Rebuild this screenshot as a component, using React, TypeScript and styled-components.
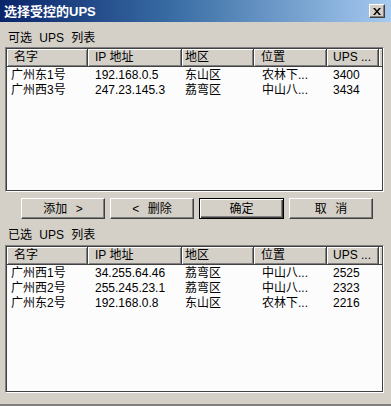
import React from 'react';
import styled, { createGlobalStyle } from 'styled-components';

const Global = createGlobalStyle`
  html, body { margin: 0; padding: 0; background: #d4d0c8; }
  body {
    font-family: "Liberation Sans", "Noto Sans CJK SC", sans-serif;
    font-size: 12px;
    color: #000;
  }
`;

const Dialog = styled.div`
  width: 391px;
  height: 406px;
  box-sizing: border-box;
  background: #d4d0c8;
  display: flex;
  flex-direction: column;
  border-bottom: 2px solid #808080;
  overflow: hidden;
`;

const TitleBar = styled.div`
  height: 22px;
  flex: none;
  display: flex;
  align-items: center;
  justify-content: space-between;
  padding: 0 6px 0 4px;
  background: linear-gradient(to right, #0a246a 0%, #3a6ea5 45%, #a6caf0 100%);
`;

const Title = styled.span`
  color: #fff;
  font-weight: bold;
  font-size: 13px;
  line-height: 15px;
`;

const CloseButton = styled.div`
  width: 16px;
  height: 14px;
  box-sizing: border-box;
  background: #d4d0c8;
  border: 1px solid;
  border-color: #fff #404040 #404040 #fff;
  box-shadow: inset -1px -1px #808080;
  display: flex;
  align-items: center;
  justify-content: center;
`;

const Body = styled.div`
  flex: 1;
  display: flex;
  flex-direction: column;
  padding: 0 7px 0 5px;
`;

const SectionLabel = styled.div<{ $top: number }>`
  margin-top: ${(p) => p.$top}px;
  height: 14px;
  line-height: 14px;
  padding-left: 3px;
  white-space: pre;
  word-spacing: 4px;
`;

const ListView = styled.div<{ $top: number; $height: number }>`
  margin-top: ${(p) => p.$top}px;
  height: ${(p) => p.$height}px;
  box-sizing: border-box;
  background: #fcfcfc;
  border: 1px solid;
  border-color: #808080 #fff #fff #808080;
  box-shadow: inset 1px 1px #404040, inset -1px -1px #404040;
  padding: 1px;
  display: flex;
  flex-direction: column;
`;

const COLS = '81px 94px 72px 73px 52px 1fr';

const HeaderRow = styled.div`
  display: grid;
  grid-template-columns: ${COLS};
  height: 18px;
  flex: none;
`;

const HeaderCell = styled.div<{ $pad: number }>`
  background: #d4d0c8;
  box-sizing: border-box;
  border-right: 1px solid #404040;
  border-bottom: 1px solid #404040;
  box-shadow: inset 1px 1px #fff, inset -1px -1px #808080;
  padding-left: ${(p) => p.$pad}px;
  line-height: 17px;
  white-space: pre;
  overflow: hidden;
`;

const HeaderFill = styled.div`
  background: #d4d0c8;
  box-shadow: inset 1px 1px #fff;
  border-bottom: 1px solid #404040;
  box-sizing: border-box;
`;

const Row = styled.div`
  display: grid;
  grid-template-columns: ${COLS};
  height: 15px;
  line-height: 15px;
`;

const Cell = styled.div<{ $pad: number }>`
  padding-left: ${(p) => p.$pad}px;
  white-space: pre;
  overflow: hidden;
`;

const Rows = styled.div`
  padding-top: 1px;
`;

const ButtonRow = styled.div`
  margin-top: 6px;
  padding-left: 16px;
  display: flex;
  gap: 5px;
  height: 21px;
`;

const Button = styled.div<{ $default?: boolean; $w: number }>`
  width: ${(p) => p.$w}px;
  height: 21px;
  box-sizing: border-box;
  background: #d4d0c8;
  display: flex;
  align-items: center;
  justify-content: center;
  white-space: pre;
  line-height: 14px;
  word-spacing: 5px;
  border: 1px solid;
  border-color: ${(p) => (p.$default ? '#000' : '#fff #404040 #404040 #fff')};
  box-shadow: ${(p) =>
    p.$default
      ? 'inset 1px 1px #fff, inset -1px -1px #404040, inset -2px -2px #808080'
      : 'inset -1px -1px #808080'};
`;

const headers = [
  { t: '名字', p: 7 },
  { t: 'IP 地址', p: 7 },
  { t: '地区', p: 3 },
  { t: '位置', p: 7 },
  { t: 'UPS ...', p: 6 },
];
const pads = [4, 7, 3, 8, 6];

const list1 = [
  ['广州东1号', '192.168.0.5', '东山区', '农林下...', '3400'],
  ['广州西3号', '247.23.145.3', '荔弯区', '中山八...', '3434'],
];
const list2 = [
  ['广州西1号', '34.255.64.46', '荔弯区', '中山八...', '2525'],
  ['广州西2号', '255.245.23.1', '荔弯区', '中山八...', '2323'],
  ['广州东2号', '192.168.0.8', '东山区', '农林下...', '2216'],
];

function Table({ rows, top, height }: { rows: string[][]; top: number; height: number }) {
  return (
    <ListView $top={top} $height={height}>
      <HeaderRow>
        {headers.map((h) => (
          <HeaderCell key={h.t} $pad={h.p}>
            {h.t}
          </HeaderCell>
        ))}
        <HeaderFill />
      </HeaderRow>
      <Rows>
        {rows.map((r, i) => (
          <Row key={i}>
            {r.map((c, j) => (
              <Cell key={j} $pad={pads[j]}>
                {c}
              </Cell>
            ))}
          </Row>
        ))}
      </Rows>
    </ListView>
  );
}

export default function App() {
  return (
    <>
      <Global />
      <Dialog>
        <TitleBar>
          <Title>选择受控的UPS</Title>
          <CloseButton>
            <svg width="8" height="7" viewBox="0 0 8 7">
              <path d="M0 0h2l2 2.5L6 0h2L5 3.5 8 7H6L4 4.5 2 7H0l3-3.5z" fill="#000" />
            </svg>
          </CloseButton>
        </TitleBar>
        <Body>
          <SectionLabel $top={9}>可选 UPS 列表</SectionLabel>
          <Table rows={list1} top={2} height={145} />
          <ButtonRow>
            <Button $w={84}>添加 &gt;</Button>
            <Button $w={84}>&lt; 删除</Button>
            <Button $w={85} $default>确定</Button>
            <Button $w={84}>取 消</Button>
          </ButtonRow>
          <SectionLabel $top={9}>已选 UPS 列表</SectionLabel>
          <Table rows={list2} top={3} height={148} />
        </Body>
      </Dialog>
    </>
  );
}
